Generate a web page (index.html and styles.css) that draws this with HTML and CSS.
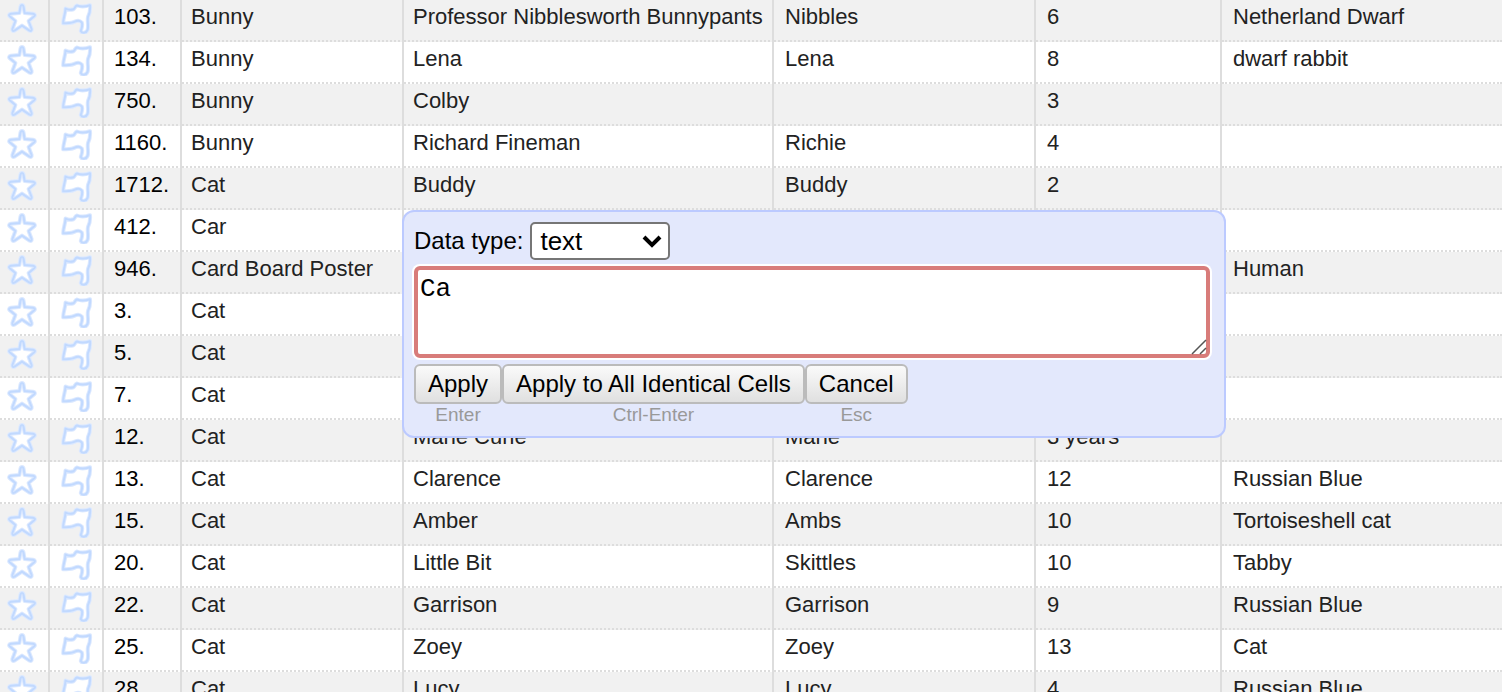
FILE: index.html
```html
<!DOCTYPE html>
<html lang="en">
<head>
<meta charset="utf-8">
<title>Pet records</title>
<link rel="stylesheet" href="styles.css">
</head>
<body>
<svg class="sprite" aria-hidden="true">
  <path id="star-shape" d="M16 3Q17.300 3 17.600 5L18.600 11L27 11.800Q30 12.600 28.300 14.300L22.600 19L25.600 27Q26 29.600 23.500 28.600L16 23.600L8.500 28.600Q6 29.600 6.400 27L9.400 19L3.700 14.300Q2 12.600 5 11.800L13.400 11L14.400 5Q14.700 3 16 3Z"/>
  <path id="flag-shape" d="M4.500 6.500C7 8 10 8 12.500 7.300C14 6.500 14 4 16 3.500C20 5 25 4.500 29 3.200C29.500 8 29 11 27 15C26 19 28 24 26.500 28C25 31.500 21 31.500 19.800 29C20.500 26 22 24 20.800 20.500C19 18.500 16 18.500 14 19.500C11 21.500 6 21 2.200 21.300C2 16 4.500 12 4.500 6.500Z"/>
  <symbol id="star" viewBox="0 0 32 32"><use href="#star-shape" class="glow"/><use href="#star-shape" class="line"/></symbol>
  <symbol id="flag" viewBox="0 0 32 32"><use href="#flag-shape" class="glow"/><use href="#flag-shape" class="line"/></symbol>
</svg>
<main class="sheet">
<table class="grid">
<colgroup><col class="c-icon"><col class="c-flag"><col class="c-num"><col class="c-type"><col class="c-name"><col class="c-nick"><col class="c-age"><col></colgroup>
<tbody>
<tr><td><button class="mark" aria-label="Star"><svg><use href="#star"/></svg></button></td><td><button class="mark" aria-label="Flag"><svg><use href="#flag"/></svg></button></td><td class="num">103.</td><td>Bunny</td><td>Professor Nibblesworth Bunnypants</td><td>Nibbles</td><td>6</td><td>Netherland Dwarf</td></tr>
<tr><td><button class="mark" aria-label="Star"><svg><use href="#star"/></svg></button></td><td><button class="mark" aria-label="Flag"><svg><use href="#flag"/></svg></button></td><td class="num">134.</td><td>Bunny</td><td>Lena</td><td>Lena</td><td>8</td><td>dwarf rabbit</td></tr>
<tr><td><button class="mark" aria-label="Star"><svg><use href="#star"/></svg></button></td><td><button class="mark" aria-label="Flag"><svg><use href="#flag"/></svg></button></td><td class="num">750.</td><td>Bunny</td><td>Colby</td><td></td><td>3</td><td></td></tr>
<tr><td><button class="mark" aria-label="Star"><svg><use href="#star"/></svg></button></td><td><button class="mark" aria-label="Flag"><svg><use href="#flag"/></svg></button></td><td class="num">1160.</td><td>Bunny</td><td>Richard Fineman</td><td>Richie</td><td>4</td><td></td></tr>
<tr><td><button class="mark" aria-label="Star"><svg><use href="#star"/></svg></button></td><td><button class="mark" aria-label="Flag"><svg><use href="#flag"/></svg></button></td><td class="num">1712.</td><td>Cat</td><td>Buddy</td><td>Buddy</td><td>2</td><td></td></tr>
<tr><td><button class="mark" aria-label="Star"><svg><use href="#star"/></svg></button></td><td><button class="mark" aria-label="Flag"><svg><use href="#flag"/></svg></button></td><td class="num">412.</td><td>Car</td><td></td><td></td><td></td><td></td></tr>
<tr><td><button class="mark" aria-label="Star"><svg><use href="#star"/></svg></button></td><td><button class="mark" aria-label="Flag"><svg><use href="#flag"/></svg></button></td><td class="num">946.</td><td>Card Board Poster</td><td></td><td></td><td></td><td>Human</td></tr>
<tr><td><button class="mark" aria-label="Star"><svg><use href="#star"/></svg></button></td><td><button class="mark" aria-label="Flag"><svg><use href="#flag"/></svg></button></td><td class="num">3.</td><td>Cat</td><td></td><td></td><td></td><td></td></tr>
<tr><td><button class="mark" aria-label="Star"><svg><use href="#star"/></svg></button></td><td><button class="mark" aria-label="Flag"><svg><use href="#flag"/></svg></button></td><td class="num">5.</td><td>Cat</td><td></td><td></td><td></td><td></td></tr>
<tr><td><button class="mark" aria-label="Star"><svg><use href="#star"/></svg></button></td><td><button class="mark" aria-label="Flag"><svg><use href="#flag"/></svg></button></td><td class="num">7.</td><td>Cat</td><td></td><td></td><td></td><td></td></tr>
<tr><td><button class="mark" aria-label="Star"><svg><use href="#star"/></svg></button></td><td><button class="mark" aria-label="Flag"><svg><use href="#flag"/></svg></button></td><td class="num">12.</td><td>Cat</td><td>Marie Curie</td><td>Marie</td><td>3 years</td><td></td></tr>
<tr><td><button class="mark" aria-label="Star"><svg><use href="#star"/></svg></button></td><td><button class="mark" aria-label="Flag"><svg><use href="#flag"/></svg></button></td><td class="num">13.</td><td>Cat</td><td>Clarence</td><td>Clarence</td><td>12</td><td>Russian Blue</td></tr>
<tr><td><button class="mark" aria-label="Star"><svg><use href="#star"/></svg></button></td><td><button class="mark" aria-label="Flag"><svg><use href="#flag"/></svg></button></td><td class="num">15.</td><td>Cat</td><td>Amber</td><td>Ambs</td><td>10</td><td>Tortoiseshell cat</td></tr>
<tr><td><button class="mark" aria-label="Star"><svg><use href="#star"/></svg></button></td><td><button class="mark" aria-label="Flag"><svg><use href="#flag"/></svg></button></td><td class="num">20.</td><td>Cat</td><td>Little Bit</td><td>Skittles</td><td>10</td><td>Tabby</td></tr>
<tr><td><button class="mark" aria-label="Star"><svg><use href="#star"/></svg></button></td><td><button class="mark" aria-label="Flag"><svg><use href="#flag"/></svg></button></td><td class="num">22.</td><td>Cat</td><td>Garrison</td><td>Garrison</td><td>9</td><td>Russian Blue</td></tr>
<tr><td><button class="mark" aria-label="Star"><svg><use href="#star"/></svg></button></td><td><button class="mark" aria-label="Flag"><svg><use href="#flag"/></svg></button></td><td class="num">25.</td><td>Cat</td><td>Zoey</td><td>Zoey</td><td>13</td><td>Cat</td></tr>
<tr><td><button class="mark" aria-label="Star"><svg><use href="#star"/></svg></button></td><td><button class="mark" aria-label="Flag"><svg><use href="#flag"/></svg></button></td><td class="num">28.</td><td>Cat</td><td>Lucy</td><td>Lucy</td><td>4</td><td>Russian Blue</td></tr>
</tbody>
</table>
<form class="editor">
  <div class="type-row">
    <label for="datatype">Data type:</label>
    <span class="select-wrap">
      <select id="datatype"><option>text</option><option>number</option><option>boolean</option><option>date</option></select>
      <svg class="chevron" viewBox="0 0 20 14" aria-hidden="true"><path d="M2 3L10 11L18 3"/></svg>
    </span>
  </div>
  <div class="text-wrap">
    <textarea aria-label="Cell value" spellcheck="false">Ca</textarea>
    <svg class="grip" viewBox="0 0 16 16" aria-hidden="true"><path d="M1 15L15 1M9 15L15 9"/></svg>
  </div>
  <div class="actions">
    <div class="action"><button type="button" aria-describedby="k1">Apply</button><span id="k1">Enter</span></div>
    <div class="action"><button type="button" aria-describedby="k2">Apply to All Identical Cells</button><span id="k2">Ctrl-Enter</span></div>
    <div class="action"><button type="button" aria-describedby="k3">Cancel</button><span id="k3">Esc</span></div>
  </div>
</form>
</main>
</body>
</html>
```
FILE: styles.css
```css
* { box-sizing: border-box; }

body {
  margin: 0;
  background: #fff;
  color: #222;
  font: 22px/26px "Liberation Sans", Arial, sans-serif;
}

.sprite { position: absolute; width: 0; height: 0; }

.sheet {
  position: relative;
  height: 100vh;
  overflow: hidden;
}

/* Record grid */
.grid {
  width: 100%;
  table-layout: fixed;
  border-collapse: separate;
  border-spacing: 0;
}

.c-icon { width: 50px; }
.c-flag { width: 54px; }
.c-num { width: 78px; }
.c-type { width: 222px; }
.c-name { width: 370px; }
.c-nick { width: 262px; }
.c-age { width: 186px; }

.grid tr:nth-child(odd) { background: #f1f1f1; }

.grid td {
  height: 42px;
  padding: 4px 0 10px 9px;
  vertical-align: top;
  white-space: nowrap;
  border-right: 2px solid #ddd;
  border-bottom: 2px dotted #ddd;
}

.grid td:last-child { border-right: 0; }
.grid td:nth-child(n+6) { padding-left: 11px; }
.grid td.num { padding-left: 10px; color: #000; }
.grid td:nth-child(1) { padding: 2px 0 0 6px; }
.grid td:nth-child(2) { padding: 2px 0 0 11px; }

.mark {
  display: block;
  padding: 0;
  border: 0;
  background: none;
}

.mark svg {
  display: block;
  width: 32px;
  height: 32px;
}

.glow {
  fill: #fff;
  stroke: #dce9ff;
  stroke-width: 4;
  stroke-linejoin: round;
}

.line {
  fill: none;
  stroke: #c1d9ff;
  stroke-width: 2;
  stroke-linejoin: round;
}

/* Cell editor */
.editor {
  position: absolute;
  top: 210px;
  left: 402px;
  width: 824px;
  padding: 10px;
  border: 2px solid #bccaff;
  border-radius: 12px;
  background: #e3e8fc;
  color: #000;
  font-size: 24px;
}

.type-row {
  display: flex;
  align-items: center;
  gap: 7px;
}

.select-wrap { position: relative; display: flex; }

select {
  width: 140px;
  height: 38px;
  padding: 0 8px;
  appearance: none;
  border: 2px solid #767676;
  border-radius: 5px;
  background: #fff;
  color: #000;
  font: 26px "Liberation Sans", Arial, sans-serif;
}

.chevron {
  position: absolute;
  top: 12px;
  right: 8px;
  width: 20px;
  height: 14px;
  fill: none;
  stroke: #000;
  stroke-width: 4;
  pointer-events: none;
}

.text-wrap { position: relative; margin: 6px 4px 0 0; }

textarea {
  display: block;
  width: 100%;
  height: 92px;
  padding: 4px 2px;
  resize: none;
  border: 4px solid #d87c7a;
  border-radius: 6px;
  outline: 0;
  box-shadow: 0 0 0 2px #fff;
  background: #fff;
  color: #000;
  font: 26px/30px "Liberation Mono", "Courier New", monospace;
}

.grip {
  position: absolute;
  right: 3px;
  bottom: 3px;
  width: 16px;
  height: 16px;
  fill: none;
  stroke: #555;
  stroke-width: 1.5;
}

.actions { display: flex; margin-top: 6px; }

.action { text-align: center; }

.action button {
  display: block;
  height: 40px;
  padding: 0 12px;
  border: 2px solid #bbb;
  border-radius: 6px;
  background: linear-gradient(#fafafa, #e0e0e0);
  color: #000;
  font: 24px "Liberation Sans", Arial, sans-serif;
}

.action span {
  display: block;
  color: #999;
  font-size: 19px;
  line-height: 22px;
}
```
